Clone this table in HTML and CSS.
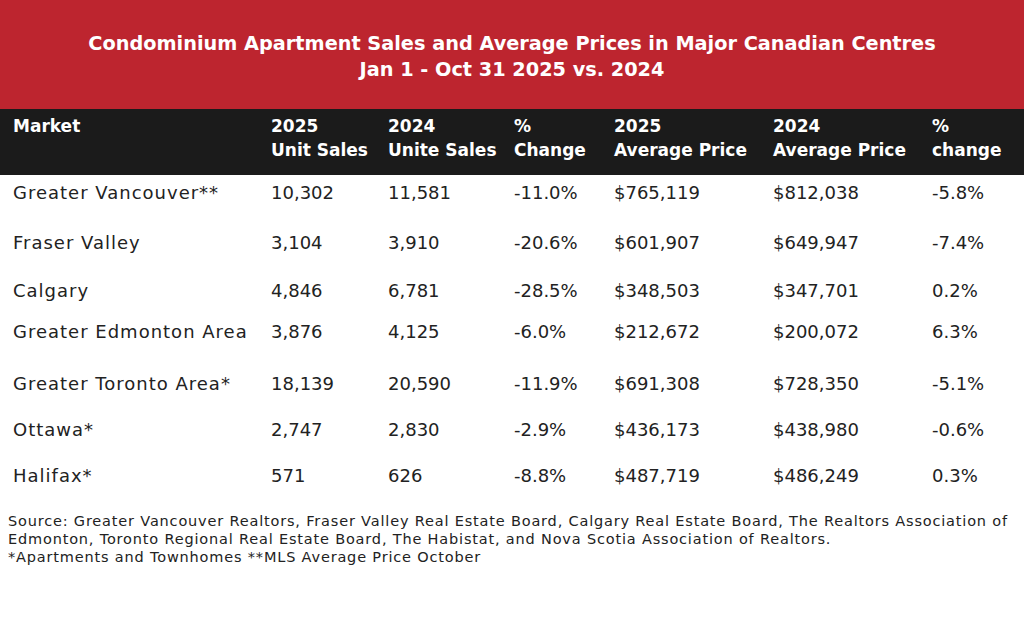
FILE: index.html
```html
<!DOCTYPE html>
<html>
<head>
<meta charset="utf-8">
<link rel="stylesheet" href="styles.css">
</head>
<body>
<div class="page">
  <header class="title">
    <div>Condominium Apartment Sales and Average Prices in Major Canadian Centres</div>
    <div>Jan 1 - Oct 31 2025 vs. 2024</div>
  </header>
  <table class="data">
    <colgroup>
      <col class="c1"><col class="c2"><col class="c3"><col class="c4"><col class="c5"><col class="c6"><col class="c7">
    </colgroup>
    <thead>
      <tr>
        <th>Market</th>
        <th>2025<br>Unit Sales</th>
        <th>2024<br>Unite Sales</th>
        <th>%<br>Change</th>
        <th>2025<br>Average Price</th>
        <th>2024<br>Average Price</th>
        <th>%<br>change</th>
      </tr>
    </thead>
    <tbody>
      <tr class="r1"><td>Greater Vancouver**</td><td>10,302</td><td>11,581</td><td>-11.0%</td><td>$765,119</td><td>$812,038</td><td>-5.8%</td></tr>
      <tr class="r2"><td>Fraser Valley</td><td>3,104</td><td>3,910</td><td>-20.6%</td><td>$601,907</td><td>$649,947</td><td>-7.4%</td></tr>
      <tr class="r3"><td>Calgary</td><td>4,846</td><td>6,781</td><td>-28.5%</td><td>$348,503</td><td>$347,701</td><td>0.2%</td></tr>
      <tr class="r4"><td>Greater Edmonton Area</td><td>3,876</td><td>4,125</td><td>-6.0%</td><td>$212,672</td><td>$200,072</td><td>6.3%</td></tr>
      <tr class="r5"><td>Greater Toronto Area*</td><td>18,139</td><td>20,590</td><td>-11.9%</td><td>$691,308</td><td>$728,350</td><td>-5.1%</td></tr>
      <tr class="r6"><td>Ottawa*</td><td>2,747</td><td>2,830</td><td>-2.9%</td><td>$436,173</td><td>$438,980</td><td>-0.6%</td></tr>
      <tr class="r7"><td>Halifax*</td><td>571</td><td>626</td><td>-8.8%</td><td>$487,719</td><td>$486,249</td><td>0.3%</td></tr>
    </tbody>
  </table>
  <footer class="notes">
    <p>Source: Greater Vancouver Realtors, Fraser Valley Real Estate Board, Calgary Real Estate Board, The Realtors Association of Edmonton, Toronto Regional Real Estate Board, The Habistat, and Nova Scotia Association of Realtors.</p>
    <p>*Apartments and Townhomes **MLS Average Price October</p>
  </footer>
</div>
</body>
</html>
```
FILE: styles.css
```css
html, body {
  margin: 0;
  padding: 0;
  background: #ffffff;
}
.page {
  width: 1024px;
  font-family: "DejaVu Sans", "Liberation Sans", sans-serif;
  color: #222222;
}
.title {
  background: #bd252f;
  color: #ffffff;
  font-weight: bold;
  font-size: 19.3px;
  line-height: 26px;
  text-align: center;
  padding: 31px 0 26px;
  height: 52px;
}
.data {
  width: 1024px;
  border-collapse: collapse;
  table-layout: fixed;
}
.c1 { width: 258px; }
.c2 { width: 117px; }
.c3 { width: 126px; }
.c4 { width: 100px; }
.c5 { width: 159px; }
.c6 { width: 159px; }
.c7 { width: 105px; }
.data thead tr {
  background: #1b1b1b;
  color: #ffffff;
  height: 66px;
}
.data th {
  text-align: left;
  vertical-align: top;
  font-weight: bold;
  font-size: 17px;
  line-height: 24px;
  padding: 5px 0 0 13px;
  white-space: nowrap;
}
.data td {
  vertical-align: top;
  font-size: 18px;
  line-height: 20px;
  padding: 8px 0 0 13px;
  white-space: nowrap;
}
.data td:first-child {
  letter-spacing: 1px;
}
.r1 { height: 50px; }
.r2 { height: 48px; }
.r3 { height: 41px; }
.r4 { height: 52px; }
.r5 { height: 46px; }
.r6 { height: 46px; }
.r7 { height: 46px; }
.notes {
  padding: 8px 8px 0 8px;
  font-size: 14.5px;
  letter-spacing: 0.82px;
  line-height: 18px;
  color: #222222;
}
.notes p {
  margin: 0;
}
```
